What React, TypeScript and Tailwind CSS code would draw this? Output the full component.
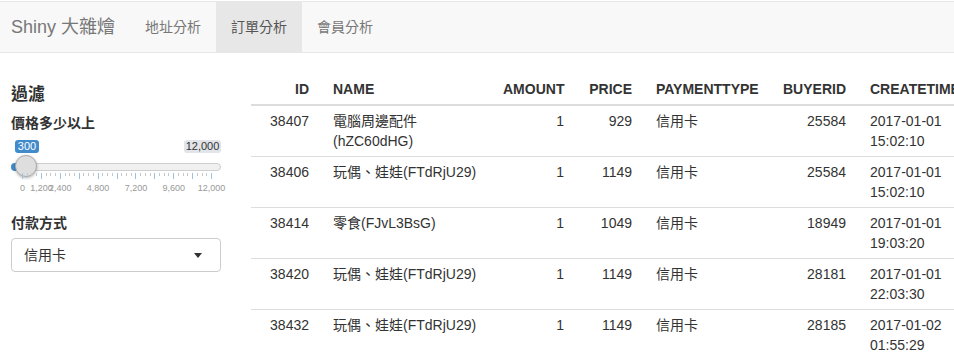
const rows = [
  { id: "38407", name: ["電腦周邊配件", "(hZC60dHG)"], amount: 1, price: 929, pay: "信用卡", buyer: "25584", date: "2017-01-01", time: "15:02:10" },
  { id: "38406", name: ["玩偶、娃娃(FTdRjU29)"], amount: 1, price: 1149, pay: "信用卡", buyer: "25584", date: "2017-01-01", time: "15:02:10" },
  { id: "38414", name: ["零食(FJvL3BsG)"], amount: 1, price: 1049, pay: "信用卡", buyer: "18949", date: "2017-01-01", time: "19:03:20" },
  { id: "38420", name: ["玩偶、娃娃(FTdRjU29)"], amount: 1, price: 1149, pay: "信用卡", buyer: "28181", date: "2017-01-01", time: "22:03:30" },
  { id: "38432", name: ["玩偶、娃娃(FTdRjU29)"], amount: 1, price: 1149, pay: "信用卡", buyer: "28185", date: "2017-01-02", time: "01:55:29" },
];

const STEP = 18.9;
const labels: Record<number, string> = { 0: "0", 1: "1,200", 2: "2,400", 4: "4,800", 6: "7,200", 8: "9,600", 10: "12,000" };

function PriceSlider() {
  const ticks = [];
  for (let i = 0; i <= 10; i++) {
    const x = 11 + i * STEP;
    ticks.push(<div key={`b${i}`} className="absolute top-[35px] h-[6px] w-px bg-[#9fc3e6]" style={{ left: x }} />);
    if (i < 10) {
      for (let j = 1; j <= 3; j++) {
        ticks.push(
          <div key={`s${i}-${j}`} className="absolute top-[35px] h-[3px] w-px bg-[#c8c8c8]" style={{ left: x + (STEP / 4) * j }} />
        );
      }
    }
    if (labels[i]) {
      ticks.push(
        <div
          key={`l${i}`}
          className="absolute top-[45px] w-[40px] -translate-x-1/2 text-center text-[9px] leading-[11px] text-[#999]"
          style={{ left: x + 0.5 }}
        >
          {labels[i]}
        </div>
      );
    }
  }

  return (
    <div className="relative mt-[5px] h-[58px] w-[210px]">
      <div className="absolute left-[4px] top-[2px] flex h-[13px] w-[24px] items-center justify-center rounded-[3px] bg-[#428bca] text-[11px] text-white">
        300
      </div>
      <div className="absolute left-[173px] top-[2px] flex h-[13px] w-[37px] items-center justify-center rounded-[3px] bg-[#e1e4e9] text-[11px] text-[#333]">
        12,000
      </div>
      <div className="absolute left-0 top-[25px] h-[8px] w-[210px] rounded-full border border-[#cfcfcf] bg-[#f0f0f0]" />
      <div className="absolute left-0 top-[25px] h-[8px] w-[16px] rounded-l-full bg-[#428bca]" />
      <div className="absolute left-[4px] top-[17px] h-[22px] w-[22px] rounded-full border border-[#acacac] bg-[#dedede] shadow-[0_1px_3px_rgba(0,0,0,0.3)]" />
      {ticks}
    </div>
  );
}

export default function App() {
  return (
    <div className="h-[352px] w-[954px] overflow-hidden bg-white font-['Liberation_Sans','Noto_Sans_CJK_TC',sans-serif] text-[14px] text-[#333]">
      <nav className="mt-[1px] flex h-[52px] items-stretch border-y border-[#e7e7e7] bg-[#f8f8f8]">
        <div className="flex items-center pl-[11px] pr-[15px] text-[18px] text-[#777]">Shiny 大雜燴</div>
        <div className="flex items-center px-[15px] text-[#777]">地址分析</div>
        <div className="flex items-center bg-[#e7e7e7] px-[15px] text-[#555]">訂單分析</div>
        <div className="flex items-center px-[15px] text-[#777]">會員分析</div>
      </nav>

      <div className="flex">
        <aside className="w-[240px] shrink-0 pl-[11px] pt-[32px]">
          <h4 className="text-[17px] font-bold leading-5">過濾</h4>
          <div className="mt-[8px] font-bold leading-5">價格多少以上</div>
          <PriceSlider />
          <div className="mt-[17px] font-bold leading-5">付款方式</div>
          <div className="mt-[5px] flex h-[34px] w-[210px] items-center justify-between rounded-[4px] border border-[#ccc] bg-white pl-[12px] pr-[18px]">
            <span>信用卡</span>
            <span className="h-0 w-0 border-x-[4px] border-t-[5px] border-x-transparent border-t-[#333]" />
          </div>
        </aside>

        <main className="min-w-0 flex-1 overflow-hidden pl-[11px] pt-[21px]">
          <table className="w-[727px] table-fixed border-collapse leading-5">
            <colgroup>
              <col className="w-[70px]" />
              <col className="w-[170px]" />
              <col className="w-[85px]" />
              <col className="w-[68px]" />
              <col className="w-[126px]" />
              <col className="w-[88px]" />
              <col className="w-[120px]" />
            </colgroup>
            <thead>
              <tr className="border-b-2 border-[#ddd] font-bold">
                <th className="px-3 py-[5px] text-right">ID</th>
                <th className="px-3 py-[5px] text-left">NAME</th>
                <th className="px-3 py-[5px] text-right">AMOUNT</th>
                <th className="px-3 py-[5px] text-right">PRICE</th>
                <th className="whitespace-nowrap px-3 py-[5px] text-left">PAYMENTTYPE</th>
                <th className="px-3 py-[5px] text-right">BUYERID</th>
                <th className="whitespace-nowrap px-3 py-[5px] text-left">CREATETIME</th>
              </tr>
            </thead>
            <tbody>
              {rows.map((r) => (
                <tr key={r.id} className="border-b border-[#ddd] align-top">
                  <td className="px-3 py-[5px] text-right">{r.id}</td>
                  <td className="whitespace-nowrap px-3 py-[5px]">
                    {r.name.map((n) => (
                      <div key={n}>{n}</div>
                    ))}
                  </td>
                  <td className="px-3 py-[5px] text-right">{r.amount}</td>
                  <td className="px-3 py-[5px] text-right">{r.price}</td>
                  <td className="px-3 py-[5px]">{r.pay}</td>
                  <td className="px-3 py-[5px] text-right">{r.buyer}</td>
                  <td className="px-3 py-[5px]">
                    <div>{r.date}</div>
                    <div>{r.time}</div>
                  </td>
                </tr>
              ))}
            </tbody>
          </table>
        </main>
      </div>
    </div>
  );
}
